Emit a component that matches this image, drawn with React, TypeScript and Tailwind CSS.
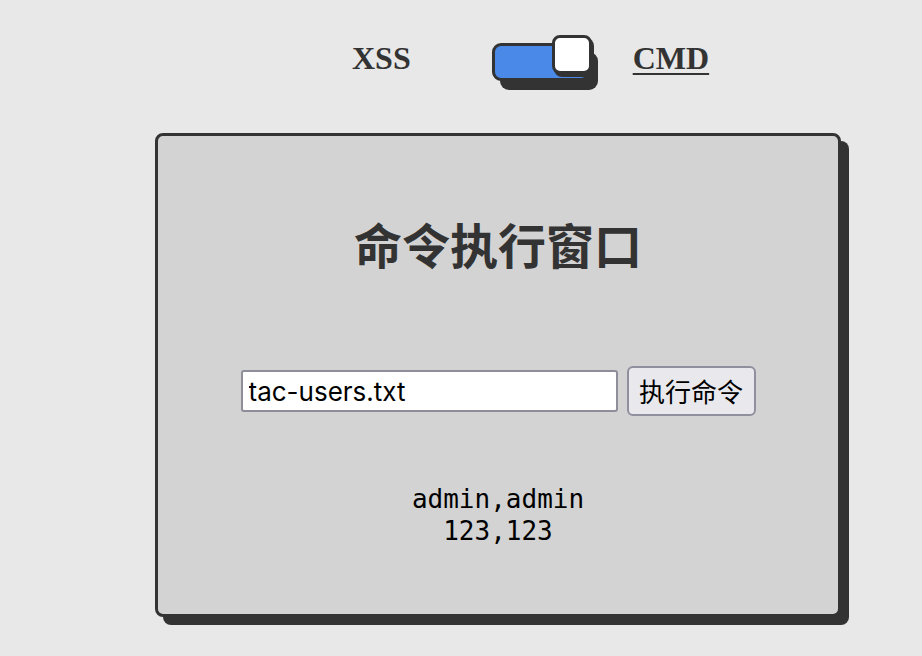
import React from 'react';

export default function App() {
  return (
    <div className="min-h-[656px] w-full bg-[#e8e8e8] font-['Liberation_Sans',sans-serif] text-[#333]">
      {/* mode switch */}
      <div className="flex items-center pl-[352px] pt-[30px] h-[86px]">
        <span className="font-['Liberation_Serif',serif] text-[32px] font-bold leading-none">XSS</span>
        <div className="relative ml-[81px] mt-[8px] h-[38px] w-[98px]">
          <div className="h-full w-full rounded-[9px] border-[3px] border-[#333] bg-[#4a89e8] shadow-[8px_9px_0_#333]"></div>
          <div className="absolute left-[60px] top-[-8px] h-[39px] w-[40px] rounded-[8px] border-[3px] border-[#333] bg-white shadow-[2px_3px_0_#333]"></div>
        </div>
        <span className="ml-[43px] font-['Liberation_Serif',serif] text-[32px] font-bold leading-none underline underline-offset-[4px] decoration-[2px]">
          CMD
        </span>
      </div>

      {/* command window */}
      <div className="ml-[155px] mt-[47px] flex h-[484px] w-[686px] flex-col items-center rounded-[8px] border-[3px] border-[#333] bg-[#d3d3d3] shadow-[8px_8px_0_#333]">
        <h1 className="mt-[83px] font-['Noto_Sans_CJK_SC',sans-serif] text-[48px] font-bold leading-none text-[#333]">
          命令执行窗口
        </h1>
        <div className="mt-[99px] flex items-center gap-[9px]">
          <input
            defaultValue="tac-users.txt"
            className="h-[42px] w-[377px] rounded-[3px] border-2 border-[#8e8e9a] bg-white px-[6px] font-['Inter','Noto_Sans_CJK_SC',sans-serif] text-[26px] text-black outline-none"
          />
          <button className="h-[50px] w-[129px] rounded-[6px] border-2 border-[#8f8f9d] bg-[#e9e9ed] font-['Noto_Sans_CJK_SC',sans-serif] text-[26px] leading-none text-black">
            执行命令
          </button>
        </div>
        <pre className="mt-[67px] text-center font-['DejaVu_Sans_Mono',monospace] text-[26px] leading-[32px] text-black">
          {'admin,admin\n123,123'}
        </pre>
      </div>
    </div>
  );
}
